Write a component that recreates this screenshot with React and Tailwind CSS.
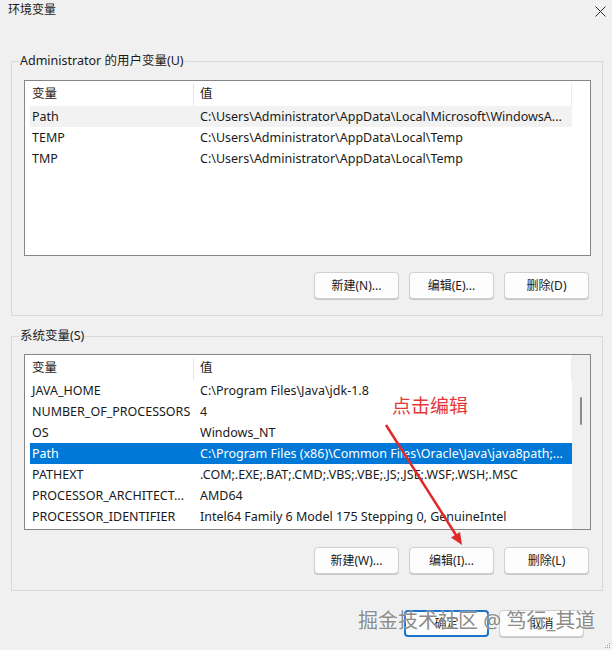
import React from 'react';

const font = { fontFamily: '"Noto Sans", "Noto Sans CJK SC", sans-serif' };

const userVars = [
    ["Path", "C:\\Users\\Administrator\\AppData\\Local\\Microsoft\\WindowsA..."],
    ["TEMP", "C:\\Users\\Administrator\\AppData\\Local\\Temp"],
    ["TMP", "C:\\Users\\Administrator\\AppData\\Local\\Temp"],
];

const sysVars = [
    ["JAVA_HOME", "C:\\Program Files\\Java\\jdk-1.8"],
    ["NUMBER_OF_PROCESSORS", "4"],
    ["OS", "Windows_NT"],
    ["Path", "C:\\Program Files (x86)\\Common Files\\Oracle\\Java\\java8path;..."],
    ["PATHEXT", ".COM;.EXE;.BAT;.CMD;.VBS;.VBE;.JS;.JSE;.WSF;.WSH;.MSC"],
    ["PROCESSOR_ARCHITECT...", "AMD64"],
    ["PROCESSOR_IDENTIFIER", "Intel64 Family 6 Model 175 Stepping 0, GenuineIntel"],
];

function Button({ children, primary }) {
    return (
        <div
            className={
                "w-[85px] h-[27px] rounded-[4px] bg-[#fdfdfd] flex items-center justify-center text-[12px] text-[#1a1a1a] " +
                (primary ? "border-2 border-[#1a73c8]" : "border border-[#d0d0d0] shadow-[0_1px_0_#c8c8c8]")
            }
        >
            {children}
        </div>
    );
}

function VarList({ rows, selected, focused, scrollbar }) {
    return (
        <div className="h-[176px] border border-[#868686] bg-white flex">
            <div className="w-[547px] flex flex-col">
                <div className="h-[25px] pt-[2px] flex items-center text-[12.5px] text-[#1a1a1a] shrink-0">
                    <div className="w-[168px] pl-[7px]">变量</div>
                    <div className="w-px h-[22px] bg-[#e5e5e5]" />
                    <div className="pl-[6px] flex-1">值</div>
                    <div className="w-px h-[24px] bg-[#ececec]" />
                </div>
                {rows.map(([name, value], i) => {
                    const sel = i === selected;
                    const bg = sel ? (focused ? "bg-[#0078d7] text-white" : "bg-[#f2f2f2] text-[#1a1a1a]") : "text-[#1a1a1a]";
                    return (
                        <div key={name + i} className={"ml-[5px] h-[21px] pt-[2px] flex items-center text-[12.5px] whitespace-nowrap shrink-0 " + bg}>
                            <div className="w-[168px] pl-[2px] overflow-hidden">{name}</div>
                            <div className="pl-[2px] flex-1 overflow-hidden">{value}</div>
                        </div>
                    );
                })}
            </div>
            <div className={"flex-1 flex justify-center " + (scrollbar ? "bg-[#f0f0f0]" : "")}>
                {scrollbar && <div className="mt-[42px] w-[2px] h-[28px] rounded-full bg-[#8a8a8a]" />}
            </div>
        </div>
    );
}

export default function App() {
    return (
        <div style={font} className="relative w-[612px] h-[650px] bg-[#f0f0f0] overflow-hidden text-[#1a1a1a]">
            <div className="relative h-[53px]">
                <div className="pl-[8px] pt-[2px] text-[12px] leading-4">环境变量</div>
                <svg className="absolute left-[595px] top-[6px]" width="11" height="11" viewBox="0 0 11 11">
                    <path d="M0.5 0.5 L10.5 10.5 M10.5 0.5 L0.5 10.5" stroke="#2b2b2b" strokeWidth="1" fill="none" />
                </svg>
            </div>

            <fieldset className="ml-[11px] w-[592px] border border-[#d9d9d9] pl-[12px] pr-[11px] pt-[11px] pb-[16px]">
                <legend className="-ml-[5px] px-[1px] text-[12.5px] leading-4">Administrator 的用户变量(U)</legend>
                <VarList rows={userVars} selected={0} />
                <div className="mt-[16px] flex justify-end gap-[10px] pr-[2px]">
                    <Button>新建(N)...</Button>
                    <Button>编辑(E)...</Button>
                    <Button>删除(D)</Button>
                </div>
            </fieldset>

            <fieldset className="mt-[12px] ml-[11px] w-[592px] border border-[#d9d9d9] pl-[12px] pr-[11px] pt-[10px] pb-[16px]">
                <legend className="-ml-[5px] px-[1px] text-[12.5px] leading-4">系统变量(S)</legend>
                <VarList rows={sysVars} selected={3} focused scrollbar />
                <div className="mt-[17px] flex justify-end gap-[10px] pr-[2px]">
                    <Button>新建(W)...</Button>
                    <Button>编辑(I)...</Button>
                    <Button>删除(L)</Button>
                </div>
            </fieldset>

            <div className="mt-[19px] flex justify-end gap-[10px] pr-[28px]">
                <Button primary>确定</Button>
                <Button>取消</Button>
            </div>

            {/* annotation */}
            <div className="absolute left-[392px] top-[394px] text-[19px] leading-6 text-[#e5383b]">点击编辑</div>
            <svg className="absolute left-0 top-0 pointer-events-none" width="612" height="650">
                <line x1="386" y1="425" x2="456" y2="535" stroke="#e02a2a" strokeWidth="2.5" />
                <polygon points="462,545 451,537.5 460,532" fill="#e02a2a" />
            </svg>

            {/* watermark */}
            <div className="absolute left-[358px] top-[607px] text-[20px] leading-7 text-[#7c7c7c]/90 whitespace-nowrap [text-shadow:0_0_2px_#ffffff]">
                掘金技术社区 @ 笃行_其道
            </div>

            <svg className="absolute left-[604px] top-[642px]" width="8" height="8">
                <rect x="5" y="1" width="1" height="1" fill="#a0a0a0" />
                <rect x="3" y="3" width="1" height="1" fill="#a0a0a0" />
                <rect x="5" y="3" width="1" height="1" fill="#a0a0a0" />
                <rect x="1" y="5" width="1" height="1" fill="#a0a0a0" />
                <rect x="3" y="5" width="1" height="1" fill="#a0a0a0" />
                <rect x="5" y="5" width="1" height="1" fill="#a0a0a0" />
            </svg>
        </div>
    );
}
